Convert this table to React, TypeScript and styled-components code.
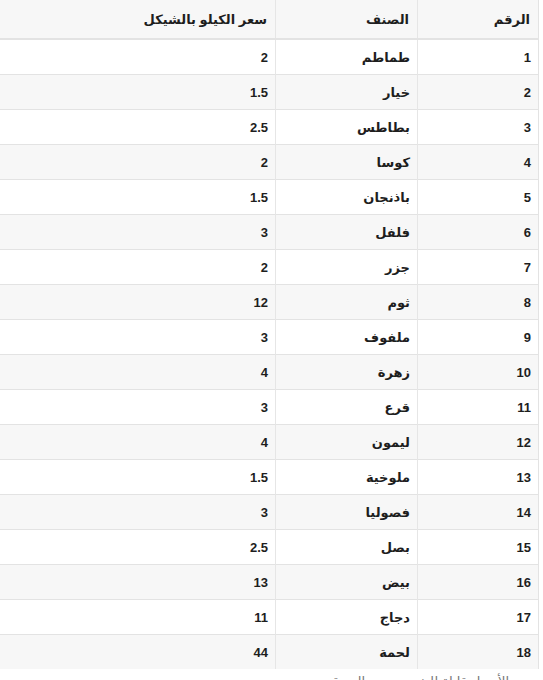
import React from 'react'
import styled, { createGlobalStyle } from 'styled-components'

type Item = { id: number; name: string; price: string }

const items: Item[] = [
  { id: 1, name: 'طماطم', price: '2' },
  { id: 2, name: 'خيار', price: '1.5' },
  { id: 3, name: 'بطاطس', price: '2.5' },
  { id: 4, name: 'كوسا', price: '2' },
  { id: 5, name: 'باذنجان', price: '1.5' },
  { id: 6, name: 'فلفل', price: '3' },
  { id: 7, name: 'جزر', price: '2' },
  { id: 8, name: 'ثوم', price: '12' },
  { id: 9, name: 'ملفوف', price: '3' },
  { id: 10, name: 'زهرة', price: '4' },
  { id: 11, name: 'قرع', price: '3' },
  { id: 12, name: 'ليمون', price: '4' },
  { id: 13, name: 'ملوخية', price: '1.5' },
  { id: 14, name: 'فصوليا', price: '3' },
  { id: 15, name: 'بصل', price: '2.5' },
  { id: 16, name: 'بيض', price: '13' },
  { id: 17, name: 'دجاج', price: '11' },
  { id: 18, name: 'لحمة', price: '44' },
]

const App: React.FC = () => {
  return (
    <Page dir="rtl">
      <GlobalStyle />
      <PriceTable>
        <colgroup>
          <col style={{ width: 121 }} />
          <col style={{ width: 142 }} />
          <col />
        </colgroup>
        <thead>
          <tr>
            <HeadCell>الرقم</HeadCell>
            <HeadCell>الصنف</HeadCell>
            <HeadCell>سعر الكيلو بالشيكل</HeadCell>
          </tr>
        </thead>
        <tbody>
          {items.map((item) => (
            <Row key={item.id} striped={item.id % 2 === 0}>
              <Cell>{item.id}</Cell>
              <Cell>{item.name}</Cell>
              <Cell>{item.price}</Cell>
            </Row>
          ))}
        </tbody>
      </PriceTable>
      <Note>الأسعار قابلة للتغيير حسب السوق</Note>
    </Page>
  )
}

const GlobalStyle = createGlobalStyle`
  html, body {
    margin: 0;
    padding: 0;
    background: #fff;
  }
  body {
    font-family: "Liberation Sans", "DejaVu Sans", sans-serif;
    color: #333;
  }
`

const Page = styled.div`
  width: 539px;
`

const PriceTable = styled.table`
  width: 539px;
  border-collapse: collapse;
  table-layout: fixed;
  border-right: 1px solid #e3e3e3;
`

const HeadCell = styled.th`
  height: 39px;
  padding: 0 8px;
  text-align: right;
  font-size: 13px;
  font-weight: 700;
  color: #1e1e1e;
  background: #f7f7f7;
  border-left: 1px solid #e6e6e6;
  border-bottom: 2px solid #e3e3e3;
  box-sizing: border-box;

  &:last-child {
    border-left: none;
  }
`

const Row = styled.tr<{ striped: boolean }>`
  background: ${(p) => (p.striped ? '#f7f7f7' : '#fff')};
`

const Cell = styled.td`
  height: 34px;
  padding: 0 7px;
  text-align: right;
  font-size: 13px;
  font-weight: 700;
  color: #1e1e1e;
  border-top: 1px solid #e3e3e3;
  border-left: 1px solid #e6e6e6;

  &:last-child {
    border-left: none;
  }
`

const Note = styled.p`
  margin: 5px 30px 0 0;
  font-size: 13px;
  color: #777;
`

export default App
